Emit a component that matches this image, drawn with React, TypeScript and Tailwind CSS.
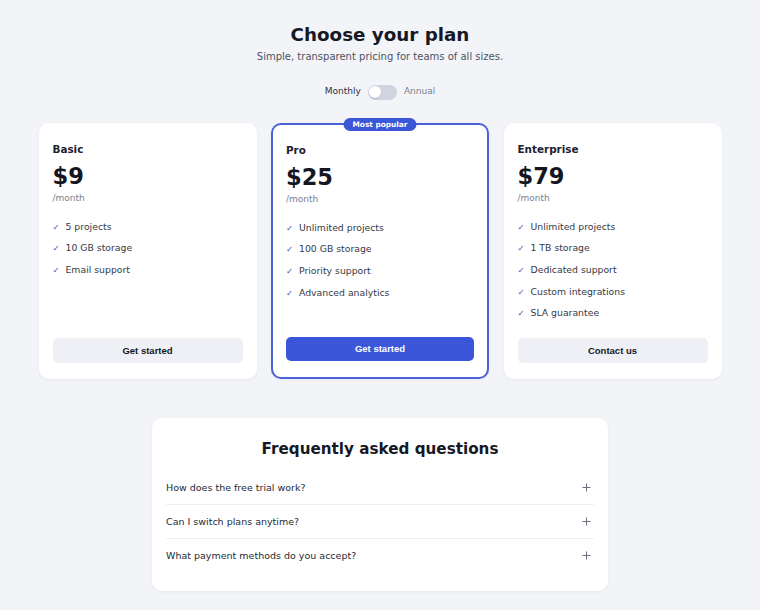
import React from "react";

type Plan = {
  name: string;
  price: string;
  features: string[];
  cta: string;
  featured?: boolean;
};

const plans: Plan[] = [
  { name: "Basic", price: "$9", features: ["5 projects", "10 GB storage", "Email support"], cta: "Get started" },
  {
    name: "Pro",
    price: "$25",
    features: ["Unlimited projects", "100 GB storage", "Priority support", "Advanced analytics"],
    cta: "Get started",
    featured: true,
  },
  {
    name: "Enterprise",
    price: "$79",
    features: ["Unlimited projects", "1 TB storage", "Dedicated support", "Custom integrations", "SLA guarantee"],
    cta: "Contact us",
  },
];

const faqs = ["How does the free trial work?", "Can I switch plans anytime?", "What payment methods do you accept?"];

function PlusIcon() {
  return (
    <svg width="9" height="9" viewBox="0 0 9 9" fill="none" className="shrink-0">
      <path d="M4.5 0.5v8M0.5 4.5h8" stroke="#6b7080" strokeWidth="1" />
    </svg>
  );
}

function PlanCard({ plan }: { plan: Plan }) {
  const featured = plan.featured;
  return (
    <div
      className={
        featured
          ? "relative flex flex-col rounded-[10px] bg-white border-2 border-[#4a62d6] px-[13px] pt-[18px] pb-[16px] shadow-[0_1px_3px_rgba(30,40,90,0.06)]"
          : "relative flex flex-col rounded-[10px] bg-white px-[14px] pt-[19px] pb-[16px] shadow-[0_1px_3px_rgba(30,40,90,0.06)]"
      }
    >
      {featured && (
        <span className="absolute -top-[7px] left-1/2 -translate-x-1/2 rounded-full bg-[#3b56d6] px-[9px] h-[13px] flex items-center text-[7.4px] font-bold leading-none text-white whitespace-nowrap">
          Most popular
        </span>
      )}
      <div className="text-[10.4px] leading-[14px] font-bold text-[#1d2030]">{plan.name}</div>
      <div className="mt-[6px] text-[22.5px] leading-[28px] font-bold text-[#141722]">{plan.price}</div>
      <div className="mt-[1.5px] text-[9px] leading-[12px] text-[#7b8092]">/month</div>
      <ul className="mt-[16px] mb-[18px] flex flex-col gap-[7.7px]">
        {plan.features.map((f) => (
          <li key={f} className="flex items-center text-[9.3px] leading-[14px] text-[#353946]">
            <span className="w-[13px] text-[8.5px] text-[#4a5bb8]">✓</span>
            <span>{f}</span>
          </li>
        ))}
      </ul>
      <button
        className={
          featured
            ? "mt-auto h-[24px] rounded-[5px] bg-[#3b56d9] text-white text-[9.5px] font-bold font-['Liberation_Sans',Arial,sans-serif]"
            : "mt-auto h-[25px] rounded-[5px] bg-[#eef0f5] text-[#15171f] text-[9.5px] font-bold font-['Liberation_Sans',Arial,sans-serif]"
        }
      >
        {plan.cta}
      </button>
    </div>
  );
}

export default function App() {
  return (
    <div className="min-h-screen bg-[#f3f4f8] font-['DejaVu_Sans',sans-serif] flex flex-col items-center pt-[23px] pb-[20px]">
      <h1 className="text-[18.3px] leading-[24px] font-bold text-[#161925]">Choose your plan</h1>
      <p className="mt-[3px] text-[10px] leading-[14px] text-[#4d5262]">
        Simple, transparent pricing for teams of all sizes.
      </p>

      <div className="mt-[20px] flex items-center h-[16px] gap-[7px] text-[9px]">
        <span className="text-[#2e3240]">Monthly</span>
        <span className="relative w-[29px] h-[15px] rounded-full bg-[#d0d4e0]">
          <span className="absolute left-[1.5px] top-[1.5px] w-[12px] h-[12px] rounded-full bg-white shadow-[0_1px_1px_rgba(0,0,0,0.15)]" />
        </span>
        <span className="text-[#7b8092]">Annual</span>
      </div>

      <div className="mt-[23px] w-[683px] grid grid-cols-3 gap-[14.5px]">
        {plans.map((p) => (
          <PlanCard key={p.name} plan={p} />
        ))}
      </div>

      <div className="mt-[39px] w-[456px] rounded-[10px] bg-white px-[14px] pt-[21px] pb-[19px] shadow-[0_1px_3px_rgba(30,40,90,0.06)]">
        <h2 className="text-center text-[15.2px] leading-[20px] font-bold text-[#161925]">Frequently asked questions</h2>
        <div className="mt-[12px] flex flex-col">
          {faqs.map((q, i) => (
            <div
              key={q}
              className={
                i < faqs.length - 1
                  ? "flex items-center justify-between py-[9.5px] border-b border-[#eceef3]"
                  : "flex items-center justify-between py-[9.5px]"
              }
            >
              <span className="text-[9.5px] leading-[14px] text-[#262a36]">{q}</span>
              <span className="mr-[3px]">
                <PlusIcon />
              </span>
            </div>
          ))}
        </div>
      </div>
    </div>
  );
}
